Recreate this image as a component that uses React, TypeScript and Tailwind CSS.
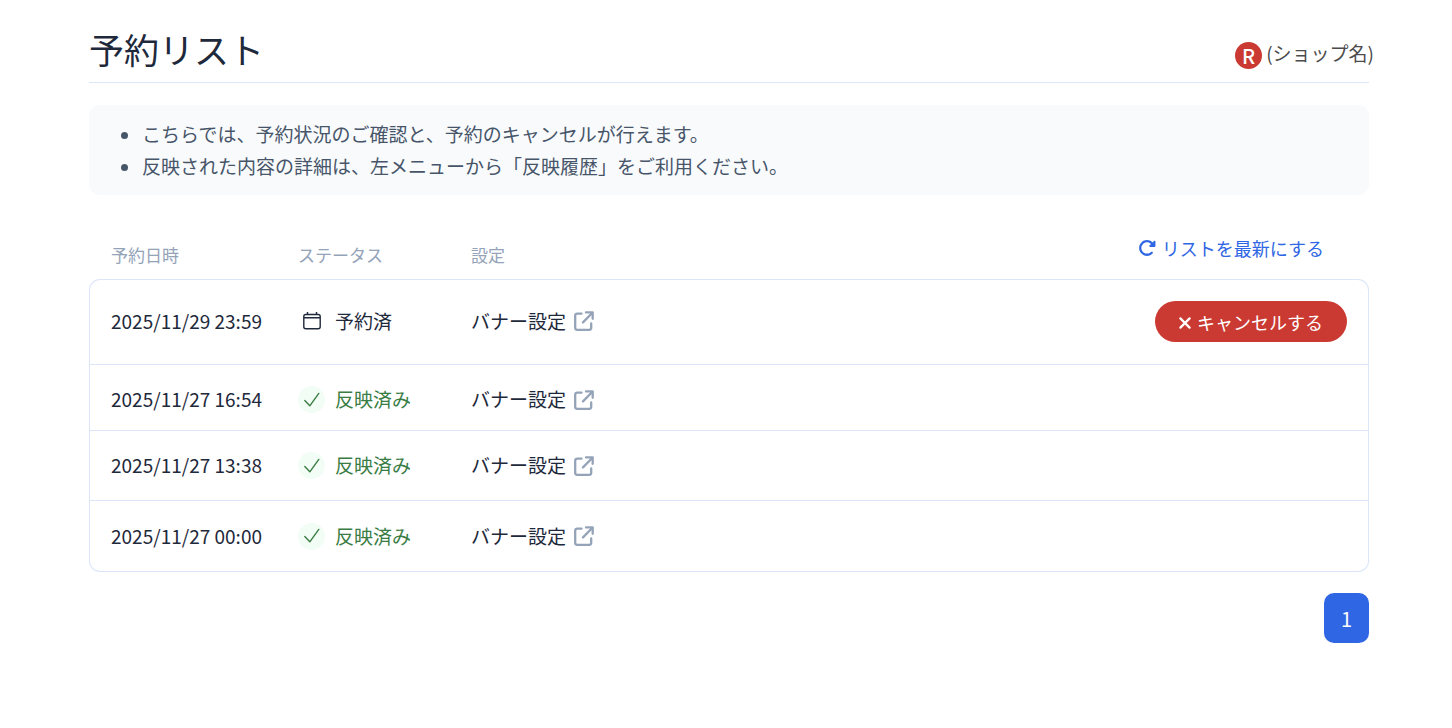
import { FaRotateRight } from 'react-icons/fa6';

type Status = 'reserved' | 'applied';

interface Reservation {
  date: string;
  status: Status;
  target: string;
  /** Height and padding of the cells in this row. */
  cell: string;
}

const RESERVATIONS: Reservation[] = [
  { date: '2025/11/29 23:59', status: 'reserved', target: 'バナー設定', cell: 'h-[85px] pb-0.5' },
  { date: '2025/11/27 16:54', status: 'applied', target: 'バナー設定', cell: 'h-[66px] pt-1' },
  { date: '2025/11/27 13:38', status: 'applied', target: 'バナー設定', cell: 'h-[70px]' },
  { date: '2025/11/27 00:00', status: 'applied', target: 'バナー設定', cell: 'h-[72px] border-b' },
];

function CalendarIcon() {
  return (
    <svg width="20" height="20" viewBox="0 0 20 20" fill="none" stroke="currentColor" strokeWidth="1.4" aria-hidden="true">
      <rect x="1.8" y="3.5" width="16.4" height="14.3" rx="2" />
      <path d="M1.8 6.8h16.4M5.5 1v2.5M14.5 1v2.5" />
    </svg>
  );
}

function CheckIcon() {
  return (
    <svg width="18" height="18" viewBox="0 0 18 18" fill="none" stroke="currentColor" strokeWidth="1.4" strokeLinecap="round" strokeLinejoin="round" aria-hidden="true">
      <path d="M1.8 9.4 6.8 14.8 15.8 2.4" />
    </svg>
  );
}

function ExternalIcon() {
  return (
    <svg width="20" height="20" viewBox="0 0 20 20" fill="none" stroke="currentColor" strokeWidth="2.3" strokeLinecap="round" strokeLinejoin="round" aria-hidden="true">
      <path d="M7.6 2.6H3.2A2 2 0 0 0 1.2 4.6V16.8A2 2 0 0 0 3.2 18.8H15.2A2 2 0 0 0 17.2 16.8V12.4" />
      <path d="M12 1.4H18.7V7.8M18.4 1.8 9 11.4" />
    </svg>
  );
}

function CloseIcon() {
  return (
    <svg width="12" height="12" viewBox="0 0 12 12" className="mt-0.5" fill="none" stroke="currentColor" strokeWidth="2.2" strokeLinecap="round" aria-hidden="true">
      <path d="M1.4 1.4 10.6 10.6M10.6 1.4 1.4 10.6" />
    </svg>
  );
}

function StatusLabel({ status }: { status: Status }) {
  if (status === 'reserved') {
    return (
      <span className="flex items-center gap-2.5">
        <span className="flex size-[27px] items-center justify-center"><CalendarIcon /></span>
        予約済
      </span>
    );
  }
  return (
    <span className="flex items-center gap-2.5 text-[#3a7d44]">
      <span className="flex size-[27px] items-center justify-center rounded-full bg-[#f2fdf5]"><CheckIcon /></span>
      反映済み
    </span>
  );
}

export default function App() {
  return (
    <main className="pl-[89px] pr-[83px] font-['Noto_Sans_CJK_JP',sans-serif] text-[19px] text-[#1e293b]">
      <header className="flex items-center justify-between border-b border-[#dbe6fb] pt-5 pb-1">
        <h1 className="text-[35px] leading-[58px]">予約リスト</h1>
        <div className="-mr-[5px] flex items-center gap-1 pt-3">
          <span className="flex size-[27px] items-center justify-center rounded-full bg-[#cb3a32] pt-0.5 text-xl font-medium text-white">R</span>
          <span className="pb-1 text-[#4b4b4b]">(ショップ名)</span>
        </div>
      </header>

      <ul className="mt-[22px] list-disc rounded-[11px] bg-[#f8fafc] py-[13px] pl-[53px] leading-8 text-[#475569]">
        <li>こちらでは、予約状況のご確認と、予約のキャンセルが行えます。</li>
        <li>反映された内容の詳細は、左メニューから「反映履歴」をご利用ください。</li>
      </ul>

      <table className="mt-9 w-full border-separate border-spacing-0 text-left">
        <thead className="text-[17px] text-[#94a3b8]">
          <tr className="h-12">
            <th className="w-[209px] pl-[22px] font-normal">予約日時</th>
            <th className="w-[173px] font-normal">ステータス</th>
            <th className="font-normal">設定</th>
            <th className="pr-[45px] pb-3.5 text-right font-normal">
              <button type="button" className="inline-flex items-center gap-1.5 text-lg text-[#2f66e3]">
                <FaRotateRight className="size-[18px]" />
                リストを最新にする
              </button>
            </th>
          </tr>
        </thead>
        <tbody>
          {RESERVATIONS.map((r, i) => {
            const first = i === 0;
            const last = i === RESERVATIONS.length - 1;
            return (
              <tr key={r.date}>
                <td className={`border-t border-l border-[#dbe6fb] pl-[21px] ${r.cell} ${first ? 'rounded-tl-[11px]' : ''} ${last ? 'rounded-bl-[11px]' : ''}`}>
                  {r.date}
                </td>
                <td className={`border-t border-[#dbe6fb] ${r.cell}`}>
                  <StatusLabel status={r.status} />
                </td>
                <td className={`border-t border-[#dbe6fb] ${r.cell}`}>
                  <a href="#" className="inline-flex items-center gap-2">
                    {r.target}
                    <span className="text-[#94a3b8]"><ExternalIcon /></span>
                  </a>
                </td>
                <td className={`border-t border-r border-[#dbe6fb] pr-[21px] text-right ${r.cell} ${first ? 'rounded-tr-[11px]' : ''} ${last ? 'rounded-br-[11px]' : ''}`}>
                  {r.status === 'reserved' && (
                    <button type="button" className="inline-flex h-[41px] items-center gap-1.5 rounded-full bg-[#cb3a32] px-6 pt-0.5 text-lg text-white">
                      <CloseIcon />
                      キャンセルする
                    </button>
                  )}
                </td>
              </tr>
            );
          })}
        </tbody>
      </table>

      <nav className="mt-[21px] flex justify-end">
        <button type="button" aria-current="page" className="h-[50px] w-[45px] rounded-[10px] bg-[#2f66e3] pt-0.5 text-xl text-white">1</button>
      </nav>
    </main>
  );
}
